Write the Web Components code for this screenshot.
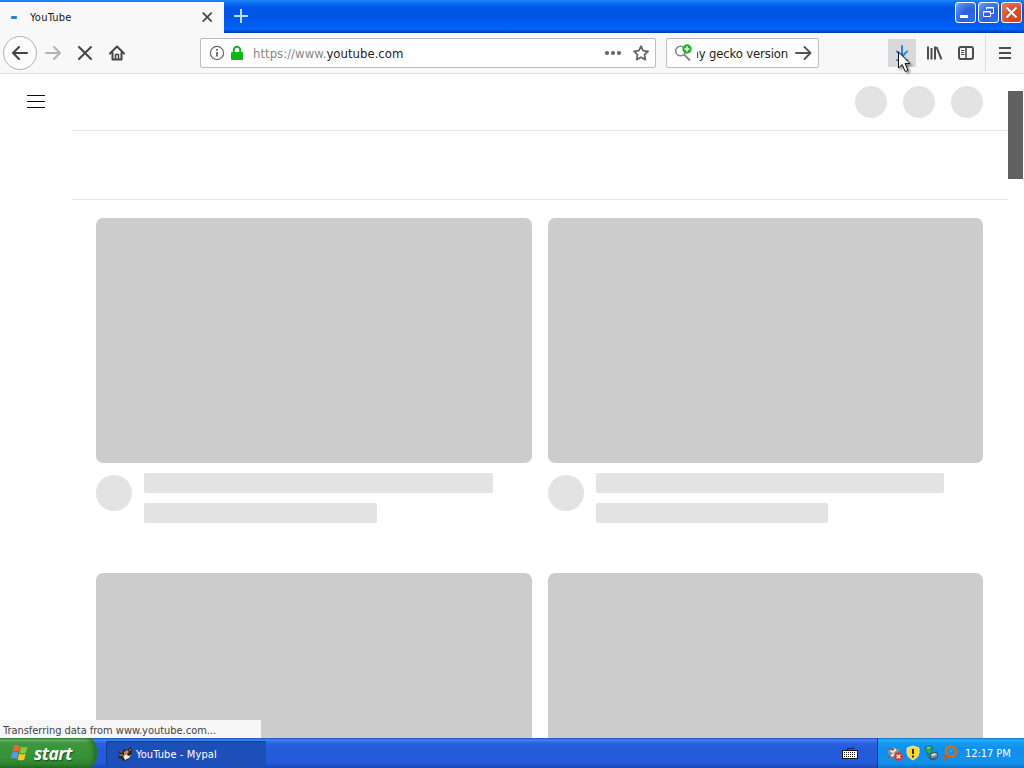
<!DOCTYPE html>
<html lang="en">
<head>
<meta charset="utf-8">
<title>YouTube - Mypal</title>
<style>
html, body { margin: 0; width: 1024px; height: 768px; overflow: hidden; }
body { font-family: "DejaVu Sans Condensed", "DejaVu Sans", sans-serif; font-stretch: condensed; font-size: 11px; color: #222; }
</style>
</head>
<body>
<xp-desktop></xp-desktop>

<script>
function define(name, html) {
  const template = document.createElement('template');
  template.innerHTML = `<style>* { box-sizing: border-box; } svg { display: block; }</style>${html}`;
  window.customElements.define(name, class extends HTMLElement {
    constructor() {
      super();
      this.attachShadow({ mode: 'open' });
      this.shadowRoot.appendChild(template.content.cloneNode(true));
    }
  });
}

define('window-button', `
<style>
:host { display: block; width: 21px; height: 21px; box-sizing: border-box; border: 1px solid #fff; border-radius: 3px;
  background: radial-gradient(circle at 85% 90%, #2c6df0, #2a5fdc 45%, #4a80ec 75%, #8aaef5); }
:host([kind="close"]) { background: radial-gradient(circle at 80% 85%, #d9401a, #dd4c2c 50%, #e9856d); }
</style>
<slot></slot>
`);

define('tab-strip', `
<style>
:host { display: flex; height: 33px; box-sizing: border-box;
  background: linear-gradient(#1a82f8 0, #1a82f8 1px, #0a6cf2 3px, #0057e5 8px, #0054e3 16px, #005cf2 24px, #0064fc 29px, #0050d4 31px, #0036a0 33px); }
.tab { width: 224px; margin-top: 2px; background: #f8f8f9; display: flex; align-items: center; padding: 0 11px 1px; }
.dash { width: 6px; height: 3px; border-radius: 1px; background: #1888d0; }
.title { margin-left: 13px; flex: 1; line-height: 16px; padding-top: 2px; color: #161616; letter-spacing: .25px; }
.plus { margin: 9px 0 0 10px; }
.buttons { margin: 2px 2px 0 auto; display: flex; gap: 2px; }
</style>
<div class="tab">
  <span class="dash"></span><span class="title">YouTube</span>
  <svg width="12" height="12" viewBox="0 0 12 12" stroke="#444" stroke-width="1.7"><path d="M1.7 1.7l9 9M10.7 1.7l-9 9"/></svg>
</div>
<svg class="plus" width="14" height="14" viewBox="0 0 14 14" stroke="#b9dcff" stroke-width="2"><path d="M7 0v14M0 7h14"/></svg>
<div class="buttons">
  <window-button><svg width="19" height="19"><path d="M4 12h8v3H4z" fill="#fff"/></svg></window-button>
  <window-button><svg width="19" height="19" fill="none" stroke="#fff"><path d="M7.500 6.500v-2h7v6h-3M7 5h8" /><path d="M4.500 8.500h7v5h-7zM4 9h8"/></svg></window-button>
  <window-button kind="close"><svg width="19" height="19" stroke="#fff" stroke-width="2"><path d="M4.500 4.500l10 10M14.500 4.500l-10 10"/></svg></window-button>
</div>
`);

define('nav-bar', `
<style>
:host { display: flex; align-items: center; height: 41px; box-sizing: border-box; background: #f8f8f9; border-bottom: 1px solid #dddddf; padding-left: 3px; }
.back { width: 34px; height: 34px; border: 1px solid #b3b3b6; border-radius: 50%; background: #fcfcfc; display: flex; align-items: center; justify-content: center; }
.nav { display: flex; align-items: center; width: 197px; }
.nav .gap { margin-left: 8px; }
.field { height: 30px; border: 1px solid #bcbcbe; border-radius: 2px; background: #fff; display: flex; align-items: center; font-size: 13px; }
.url { width: 456px; padding: 0 6px 0 8px; }
.addr { flex: 1; margin-left: 8px; letter-spacing: .02px; color: #888; white-space: nowrap; }
.addr b { font-weight: normal; color: #222; }
.search { width: 153px; margin-left: 10px; padding: 0 5px 0 7px; }
.query { width: 91px; margin: 0 7px 0 5px; display: flex; justify-content: flex-end; overflow: hidden; white-space: nowrap; letter-spacing: -.16px; }
.tools { margin-left: auto; display: flex; align-items: center; height: 40px; }
.tool { width: 28px; height: 28px; display: grid; place-items: center; margin-right: 4px; }
.tool.on { background: #d9d9dc; }
.menu { border-left: 1px solid #dcdcde; width: 39px; height: 36px; padding-right: 1px; display: grid; place-items: center; margin-left: 1px; }
</style>
<div class="nav">
  <div class="back"><svg width="16" height="16" fill="none" stroke="#444" stroke-width="2" stroke-linecap="round" stroke-linejoin="round"><path d="M15 8H1.500M7 2L1 8l6 6"/></svg></div>
  <svg class="gap" width="16" height="16" fill="none" stroke="#b3b3b3" stroke-width="2" stroke-linecap="round" stroke-linejoin="round"><path d="M1 8h13.500M9 2l6 6-6 6"/></svg>
  <svg class="gap" style="margin-left:16px" width="16" height="16" stroke="#444" stroke-width="2" stroke-linecap="round"><path d="M2 2l12 12M14 2L2 14"/></svg>
  <svg style="margin-left:16px" width="16" height="16" fill="none" stroke="#444" stroke-width="2" stroke-linecap="round" stroke-linejoin="round"><path d="M1 8.500L8 1.500l7 7"/><path d="M3.500 8v6.500h9V8"/><path d="M6.500 14V9.500h3V14" stroke-width="1.500"/></svg>
</div>
<div class="field url">
  <svg width="16" height="16" fill="none" stroke="#666"><circle cx="8" cy="8" r="6.600" stroke-width="1.200"/><path d="M8 7v4.500M8 4v1.700" stroke-width="1.800"/></svg>
  <svg style="margin-left:4px" width="16" height="16"><rect x="2" y="7" width="12" height="8" rx="1" fill="#12b812"/><path d="M4.800 8V5a3.200 3.200 0 0 1 6.400 0v3" fill="none" stroke="#12b812" stroke-width="2"/></svg>
  <span class="addr">https://www.<b>youtube.com</b></span>
  <svg width="18" height="16" fill="#666"><circle cx="3" cy="8" r="2.100"/><circle cx="9" cy="8" r="2.100"/><circle cx="15" cy="8" r="2.100"/></svg>
  <svg style="margin-left:11px" width="16" height="16" fill="none" stroke="#666" stroke-width="1.800" stroke-linejoin="round"><path d="M8 1.200l2.100 4.400 4.900.7-3.500 3.400.8 4.900L8 12.300l-4.300 2.300.8-4.900L1 6.300l4.900-.7z"/></svg>
</div>
<div class="field search">
  <svg width="18" height="18" fill="none"><circle cx="6.500" cy="7" r="4.800" stroke="#888" stroke-width="1.600"/><path d="M10 10.500l6 6" stroke="#888" stroke-width="2"/><circle cx="13" cy="5" r="4.700" fill="#22b522"/><path d="M13 2.500v5M10.500 5h5" stroke="#fff" stroke-width="1.500"/></svg>
  <span class="query">my gecko version</span>
  <svg width="17" height="16" fill="none" stroke="#555" stroke-width="1.900" stroke-linecap="round" stroke-linejoin="round"><path d="M1 8h14M9.500 2l6 6-6 6"/></svg>
</div>
<div class="tools">
  <div class="tool on"><svg width="16" height="16" fill="none" stroke="#2a86d8" stroke-width="2" stroke-linecap="round"><path d="M8 1v10M3 6.500l5 5 5-5M3 15h10"/></svg></div>
  <div class="tool"><svg width="16" height="16" fill="none" stroke="#4c4c4f" stroke-width="2"><path d="M2 1.500v13M5.500 3v11.500M9 1.500v13M10.500 2l5 12.500"/></svg></div>
  <div class="tool"><svg width="16" height="16" fill="none" stroke="#4c4c4f"><rect x="1" y="2" width="14" height="12" rx="2" stroke-width="2"/><path d="M8 2v12" stroke-width="1.600"/><path d="M3 5.500h3.500M3 7.500h3M3 9.500h3.500" /></svg></div>
  <div class="menu"><svg width="14" height="14" stroke="#4c4c4f" stroke-width="2"><path d="M1 2h12M1 7h12M1 12h12"/></svg></div>
</div>
`);

define('video-skeleton', `
<style>
:host { display: block; }
.thumb { height: 245px; border-radius: 7px; background: #ccc; }
.details { display: flex; padding-top: 10px; gap: 12px; }
.avatar { width: 36px; height: 36px; margin-top: 2px; border-radius: 50%; background: #e3e3e3; }
.lines { flex: 1; }
.line { height: 20px; width: 90%; border-radius: 2px; background: #e3e3e3; margin-bottom: 10px; }
.line.short { width: 60%; }
</style>
<div class="thumb"></div>
<div class="details">
  <div class="avatar"></div>
  <div class="lines"><div class="line"></div><div class="line short"></div></div>
</div>
`);

define('youtube-page', `
<style>
:host { display: flex; height: 664px; overflow: hidden; background: #fff; }
.guide { width: 72px; padding: 21px 0 0 27px; }
.main { width: 936px; }
.masthead { height: 57px; border-bottom: 1px solid #e6e6e6; display: flex; justify-content: flex-end; align-items: center; gap: 16px; padding-right: 25px; }
.masthead i { width: 32px; height: 32px; border-radius: 50%; background: #e3e3e3; }
.chips { height: 69px; border-bottom: 1px solid #e6e6e6; }
.grid { display: grid; grid-template-columns: 436px 435px; column-gap: 16px; grid-auto-rows: 355px; padding: 18px 0 0 24px; }
.scroll { width: 16px; padding: 17px 1px 0 0; }
.thumb { height: 88px; background: #606060; }
</style>
<div class="guide"><svg width="18" height="14" stroke="#0a0a0a"><path d="M0 .500h18M0 6.500h18M0 12.500h18"/></svg></div>
<div class="main">
  <div class="masthead"><i></i><i></i><i></i></div>
  <div class="chips"></div>
  <div class="grid">
    <video-skeleton></video-skeleton><video-skeleton></video-skeleton>
    <video-skeleton></video-skeleton><video-skeleton></video-skeleton>
  </div>
</div>
<div class="scroll"><div class="thumb"></div></div>
`);

define('xp-taskbar', `
<style>
:host { display: flex; height: 30px; color: #fff;
  background: linear-gradient(#1f4fbd 0, #3f86f0 2px, #2b63dd 5px, #245bd8 10px, #245bdb 25px, #1c47b0 30px); }
.start { width: 97px; display: flex; align-items: center; padding: 0 0 1px 10px; border-radius: 0 9px 9px 0 / 0 14px 14px 0;
  background: linear-gradient(#2c7a2c 0, #65b565 2px, #3d973d 5px, #369036 20px, #2f852f 26px, #226b22 30px);
  box-shadow: inset -5px 0 5px -2px #246c24; }
.start span { margin-left: 5px; font: italic bold 17.5px/20px "Open Sans", "Noto Sans", sans-serif; font-stretch: normal; letter-spacing: -.5px; text-shadow: 1px 1px 1px #1c501c; }
.task { width: 160px; height: 25px; margin: 3px 0 0 9px; display: flex; align-items: center; padding-left: 12px; border-radius: 2px; background: #1d4fb9; box-shadow: inset 1px 1px 1px #153a90; }
.task span { margin-left: 2px; padding-top: 2px; letter-spacing: .1px; }
.lang { margin: 8px 19px 0 auto; }
.tray { width: 147px; border-left: 1px solid #0a3a8e; display: flex; align-items: center; padding: 0 0 0 9px; gap: 2px;
  background: linear-gradient(#1470c8 0, #24b0f6 2px, #159af0 5px, #118ee9 12px, #1291ea 25px, #0f70c4 30px); }
.clock { margin-left: 5px; white-space: nowrap; letter-spacing: -.05px; }
</style>
<div class="start">
  <svg width="19" height="19" viewBox="0 0 19 19">
    <path d="M4 3q3-2 6 0L8.500 9q-3-2-6 0z" fill="#ee6338"/><path d="M11 3.500q3 1.800 6.500 0L16 9.500q-3 1.700-6.500 0z" fill="#8cc63a"/>
    <path d="M2.200 10q3-2 6 0L6.700 16q-3-2-6 0z" fill="#5b98f4"/><path d="M9.200 10.500q3 1.800 6.500 0l-1.500 6q-3 1.700-6.500 0z" fill="#fac927"/>
  </svg>
  <span>start</span>
</div>
<div class="task">
  <svg width="16" height="16"><path d="M0 5l5 1 1-3 3 1 4-3 1 4-1 5-3 4-4 1-4-3-2 1 1-3 2-1z" fill="#30231e"/><path d="M6 6l3-2 2 2-2 2-3 1zM1 5l3 1v1z" fill="#c98558"/><path d="M5 10l4-2 1 2 3-1-2 3-4 2z" fill="#f3ebdd"/><path d="M2 9h3M11 5l2-2" stroke="#d29b72"/></svg>
  <span>YouTube - Mypal</span>
</div>
<svg class="lang" width="16" height="14"><path d="M5.500 5V2.500h6V1" fill="none" stroke="#15245a"/><rect x=".5" y="4.500" width="15" height="8" fill="#fff" stroke="#111"/><path d="M2 6.500h12M2 8.500h12M2 10.500h12" stroke="#111" stroke-dasharray="1 1"/></svg>
<div class="tray">
  <svg width="16" height="16"><path d="M2 3l3 1 2-2 2 3 4-2-1 4 2 3-4 3-4-1-4 2 1-4-2-2z" fill="#8a918e"/><path d="M3 5l3 2 3-3M3 12l4-3" stroke="#eef2ee" stroke-width="2"/><path d="M2 3l2 2M2 13l2-2" stroke="#c44532" stroke-width="2"/><circle cx="11.500" cy="11.500" r="4.300" fill="#dd3520"/><path d="M9.700 9.700l3.600 3.600m0-3.600l-3.600 3.600" stroke="#fff" stroke-width="1.400"/></svg>
  <svg width="16" height="16"><path d="M8 1l6 2v5q0 4-6 7-6-3-6-7V3z" fill="#f8d836" stroke="#eee8ac"/><path d="M8 4v5M8 10.500v2" stroke="#3b300c" stroke-width="2"/></svg>
  <svg width="16" height="16"><path d="M7 9l7-2 1 5-7 2z" fill="#8b979c" stroke="#344d59"/><path d="M8.500 10l4-1" stroke="#e6eef0" stroke-width="1.500"/><path d="M4 9l3 5 7 1" fill="none" stroke="#3b5968"/><path d="M2 2l6-1 3 2-3 1 1 4-4 1-2-4z" fill="#38a854" stroke="#217742"/><path d="M4 3l3-.500" stroke="#b6e9b9"/></svg>
  <svg width="17" height="16" fill="none"><circle cx="10" cy="6.500" r="5" stroke="#d96a16" stroke-width="2.600"/><path d="M6 11l-3 3" stroke="#c65d15" stroke-width="3" stroke-linecap="round"/><path d="M8.500 7.500l3-3" stroke="#e9a266" stroke-width="1"/></svg>
  <span class="clock">12:17 PM</span>
</div>
`);

define('xp-desktop', `
<style>
:host { display: flex; flex-direction: column; position: relative; width: 1024px; height: 768px; overflow: hidden; }
.status { position: absolute; left: 0; top: 720px; width: 261px; height: 18px; padding-left: 3px; line-height: 21px; background: #f7f7f7; color: #444; white-space: nowrap; letter-spacing: -.03px; }
.cursor { position: absolute; left: 897px; top: 51px; filter: drop-shadow(2px 2px 1px #0006); }
</style>
<tab-strip></tab-strip>
<nav-bar></nav-bar>
<youtube-page></youtube-page>
<xp-taskbar></xp-taskbar>
<div class="status">Transferring data from www.youtube.com...</div>
<svg class="cursor" width="14" height="22"><path d="M1.500 1v16l3.700-3.500 3 7 2.800-1.200-3-6.800h5z" fill="#fff" stroke="#111"/></svg>
`);
</script>
</body>
</html>
